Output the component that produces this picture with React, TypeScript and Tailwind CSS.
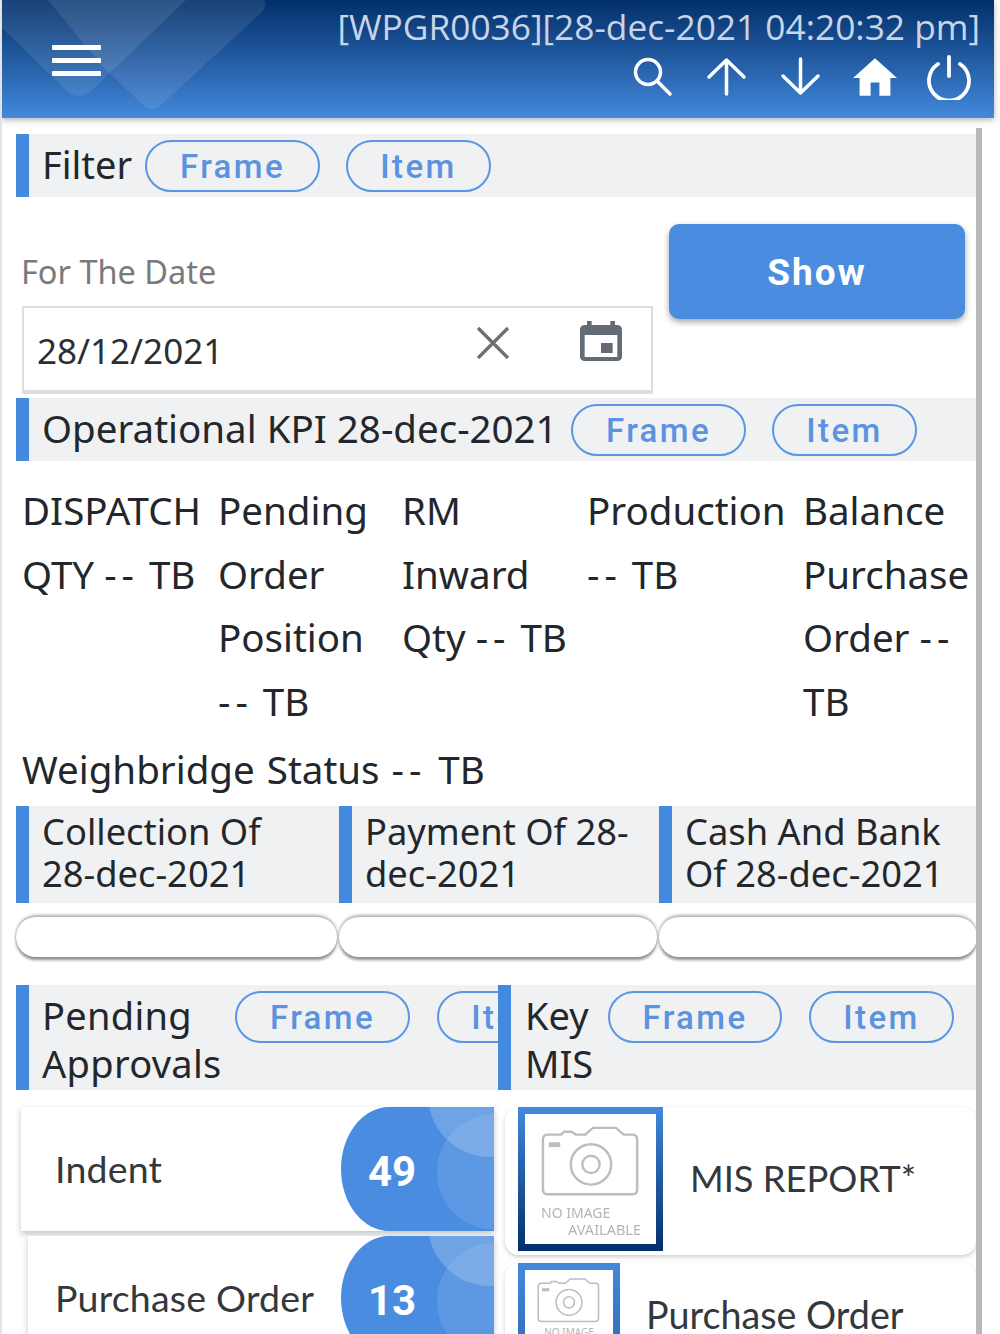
import React from "react";

const Pill = ({ label, w }: { label: string; w: string }) => (
  <span className={`flex h-[52px] shrink-0 items-center justify-center rounded-full border-2 border-[#5a96e3] pt-[2px] font-['Roboto',sans-serif] text-[33px] font-medium tracking-[2.4px] text-[#5b93e0] ${w}`}>
    {label}
  </span>
);

const Head = ({ h = "h-[63px]", className = "", children }: { h?: string; className?: string; children?: React.ReactNode }) => (
  <div className={`flex overflow-hidden bg-[#f0f1f3] ${h} ${className}`}>
    <div className="mr-[13px] w-[13px] shrink-0 bg-[#4389e0]" />
    {children}
  </div>
);

const Camera = ({ w, h }: { w: number; h: number }) => (
  <svg width={w} height={h} viewBox="14 13 104 74" fill="none" stroke="#bdbdbd" strokeWidth="2.5" className="blur-[0.4px]">
    <path d="M21 22h14l3-3h8l4 3h10l8-7h24l8 7h9q5 0 5 5v52q0 5-5 5H21q-5 0-5-5V27q0-5 5-5z" />
    <circle cx="66" cy="53" r="21" />
    <circle cx="66" cy="53" r="9" />
    <rect x="22" y="30" width="12" height="5" fill="#bdbdbd" stroke="none" />
  </svg>
);

const Stat = ({ label, value, className = "", pad }: { label: string; value: string; className?: string; pad: string }) => (
  <div className={`flex h-[124px] items-center justify-between bg-white shadow-[0_3px_6px_rgba(120,130,140,0.45)] ${className}`}>
    <span className={`font-['Lato',sans-serif] text-[37.5px] tracking-[0.2px] text-[#33383d] ${pad}`}>{label}</span>
    <div className="relative flex h-full w-[153px] items-center overflow-hidden rounded-l-[48px_62px] bg-[#4a8de0]">
      <span className="absolute left-[96px] top-[7px] h-[116px] w-[116px] rounded-full bg-white/10" />
      <span className="absolute left-[87px] top-[-74px] h-[124px] w-[124px] rounded-full bg-white/20" />
      <span className="relative pl-[27px] pt-[4px] font-['Roboto',sans-serif] text-[42px] font-bold text-white">{value}</span>
    </div>
  </div>
);

const D = () => <span className="tracking-[5px]">--</span>;

export default function App() {
  return (
    <div className="h-[1334px] w-[1000px] overflow-hidden border-l-2 border-[#e4e4e4] bg-white font-['Noto_Sans',sans-serif] text-[#23272c]">
      <header className="relative flex h-[118px] w-[992px] flex-col items-end overflow-hidden bg-gradient-to-b from-[#03306b] to-[#4389dc] pr-[14px] shadow-[0_2px_6px_rgba(0,0,0,0.3)]">
        <svg className="absolute left-0 top-0" width="270" height="112" viewBox="0 0 270 112" fill="#ffffff" fillOpacity="0.09">
          <path d="M0 0h184L88 92q-12 8-22 0L0 28z" />
          <path d="M46 0h216q4 6-2 12L158 106q-8 6-16 0L100 66z" />
        </svg>
        <svg className="absolute left-[50px] top-[44px]" width="50" height="36" viewBox="0 0 50 36" fill="#fff">
          <rect x="0" y="1" width="49" height="5" rx="1" />
          <rect x="0" y="14" width="49" height="5" rx="1" />
          <rect x="0" y="27" width="49" height="5" rx="1" />
        </svg>
        <div className="relative mt-[1px] h-[50px] whitespace-nowrap font-['Open_Sans',sans-serif] text-[35.3px] leading-[50px] text-[#c8d5e6]">
          [WPGR0036][28-dec-2021 04:20:32 pm]
        </div>
        <div className="relative mt-[3px] flex items-center gap-[31px] pr-[8px] text-white">
          <svg width="44" height="44" viewBox="0 0 44 44" fill="none" stroke="#fff" strokeWidth="3.5" strokeLinecap="round">
            <circle cx="18" cy="17" r="12.5" />
            <path d="M27 26l13 13" />
          </svg>
          <svg width="43" height="44" viewBox="0 0 43 44" fill="none" stroke="#fff" strokeWidth="3.5" strokeLinecap="round" strokeLinejoin="round">
            <path d="M21.5 39V5M4 22L21.5 5 39 22" />
          </svg>
          <svg width="43" height="44" viewBox="0 0 43 44" fill="none" stroke="#fff" strokeWidth="3.5" strokeLinecap="round" strokeLinejoin="round">
            <path d="M21.5 4v34M4 21l17.5 17L39 21" />
          </svg>
          <svg width="44" height="44" viewBox="2 3 20 17" fill="#fff">
            <path d="M10 20v-6h4v6h5v-8h3L12 3 2 12h3v8z" />
          </svg>
          <svg width="46" height="46" viewBox="0 0 46 46" fill="none" stroke="#fff" strokeWidth="3.8" strokeLinecap="round" className="-ml-[2px]">
            <path d="M23 3v19M12 10a20 20 0 1 0 22 0" />
          </svg>
        </div>
      </header>

      <div className="flex pl-[14px] pt-[10px]">
        <main className="w-[960px] pt-[6px]">
          <Head>
            <span className="w-[103px] shrink-0 text-[38px] leading-[60px]">Filter</span>
            <div className="flex items-center gap-[26px]">
              <Pill label="Frame" w="w-[175px]" />
              <Pill label="Item" w="w-[145px]" />
            </div>
          </Head>

          <div className="flex h-[196px] items-start pl-[6px]">
            <div className="w-[631px]">
              <div className="-ml-px flex h-[109px] items-end pb-[12px] text-[32.5px] leading-[44px] text-[#7a7a7a]">For The Date</div>
              <div className="flex h-[88px] w-[631px] items-center justify-between border-2 border-b-4 border-[#dedede] pl-[13px] pr-[22px]">
                <span className="pt-[4px] text-[35px] text-[#2b2f33]">28/12/2021</span>
                <div className="flex items-center gap-[62px] pb-[12px]">
                  <svg width="36" height="36" viewBox="0 0 36 36" fill="none" stroke="#6b7075" strokeWidth="3.2">
                    <path d="M3 3l30 30M33 3L3 33" />
                  </svg>
                  <svg width="56" height="48" viewBox="0 0 24 24" fill="#636b74" preserveAspectRatio="none">
                    <path d="M17 12h-5v5h5v-5zM16 1v2H8V1H6v2H5c-1.11 0-1.99.9-1.99 2L3 19c0 1.1.89 2 2 2h14c1.1 0 2-.9 2-2V5c0-1.1-.9-2-2-2h-1V1h-2zm3 18H5V8h14v11z" />
                  </svg>
                </div>
              </div>
            </div>
            <button className="ml-[16px] mt-[27px] h-[95px] w-[296px] rounded-[10px] bg-[#4a8de0] pt-[2px] font-['Roboto',sans-serif] text-[37px] font-bold tracking-[2px] text-white shadow-[0_3px_6px_rgba(0,0,0,0.35)]">
              Show
            </button>
          </div>

          <Head className="mt-[5px]">
            <span className="w-[529px] shrink-0 whitespace-nowrap text-[38.5px] leading-[60px]">Operational KPI 28-dec-2021</span>
            <div className="flex items-center gap-[26px]">
              <Pill label="Frame" w="w-[175px]" />
              <Pill label="Item" w="w-[145px]" />
            </div>
          </Head>

          <div className="mt-[18px] grid grid-cols-[196px_184px_185px_216px_179px] whitespace-nowrap pl-[6px] text-[38.5px] leading-[63.5px]">
            <div>DISPATCH<br />QTY <D /> TB</div>
            <div>Pending<br />Order<br />Position<br /><D /> TB</div>
            <div>RM<br />Inward<br />Qty <D /> TB</div>
            <div>Production<br /><D /> TB</div>
            <div>Balance<br />Purchase<br />Order <D /><br />TB</div>
          </div>
          <div className="mt-[5px] pl-[6px] text-[38.5px] leading-[63px] [word-spacing:2px]">Weighbridge Status <D /> TB</div>

          <div className="mt-[5px] grid grid-cols-[323px_320px_317px] text-[36.3px] leading-[42px]">
            <Head h="h-[97px]"><span className="whitespace-nowrap pt-[4px]">Collection Of<br />28-dec-2021</span></Head>
            <Head h="h-[97px]"><span className="whitespace-nowrap pt-[4px]">Payment Of 28-<br />dec-2021</span></Head>
            <Head h="h-[97px]"><span className="whitespace-nowrap pt-[4px]">Cash And Bank<br />Of 28-dec-2021</span></Head>
          </div>
          <div className="mt-[14px] grid grid-cols-[323px_320px_318px]">
            <div className="mr-[2px] h-[40px] rounded-[20px] bg-white shadow-[0_3px_3px_#8f8f8f,0_-2px_3px_#b0b0b0]" />
            <div className="mr-[2px] h-[40px] rounded-[20px] bg-white shadow-[0_3px_3px_#8f8f8f,0_-2px_3px_#b0b0b0]" />
            <div className="h-[40px] rounded-[20px] bg-white shadow-[0_3px_3px_#8f8f8f,0_-2px_3px_#b0b0b0]" />
          </div>

          <div className="mt-[28px] grid grid-cols-[482px_478px]">
            <div>
              <Head h="h-[105px]">
                <span className="w-[193px] shrink-0 pt-[6px] text-[38px] leading-[48px] tracking-[0.3px]">Pending Approvals</span>
                <div className="mt-[6px] flex h-[52px] gap-[27px]">
                  <Pill label="Frame" w="w-[175px]" />
                  <Pill label="Item" w="w-[145px]" />
                </div>
              </Head>
              <div className="mt-[17px] pl-[5px] pr-[4px]">
                <Stat label="Indent" value="49" pad="pl-[34px]" />
                <Stat label="Purchase Order" value="13" className="ml-[7px] mt-[5px]" pad="pl-[27px]" />
              </div>
            </div>
            <div>
              <Head h="h-[105px]">
                <span className="w-[84px] shrink-0 pl-px pt-[6px] text-[38px] leading-[48px]">Key<br />MIS</span>
                <div className="mt-[6px] flex h-[52px] gap-[27px]">
                  <Pill label="Frame" w="w-[174px]" />
                  <Pill label="Item" w="w-[145px]" />
                </div>
              </Head>
              <div className="mt-[17px] pl-[7px]">
                <div className="flex h-[148px] items-start rounded-[14px] bg-white pl-[13px] shadow-[0_2px_4px_rgba(0,0,0,0.2)]">
                  <div className="h-[144px] w-[145px] shrink-0 bg-gradient-to-b from-[#4389dc] to-[#03306b] p-[7px]">
                    <div className="flex h-full flex-col items-center bg-white pt-[11px]">
                      <Camera w={100} h={73} />
                      <div className="mt-[6px] w-full blur-[0.4px] pl-[16px] text-[14px] leading-[17px] text-[#b5b5b5]">NO IMAGE</div>
                      <div className="w-full blur-[0.4px] pr-[15px] text-right text-[14.5px] leading-[17px] text-[#b5b5b5]">AVAILABLE</div>
                    </div>
                  </div>
                  <span className="self-center whitespace-nowrap pb-[6px] pl-[27px] font-['Lato',sans-serif] text-[36.3px] text-[#33383d]">MIS REPORT*</span>
                </div>
                <div className="mt-[8px] flex h-[120px] items-start rounded-[14px] bg-white pl-[13px] shadow-[0_2px_4px_rgba(0,0,0,0.2)]">
                  <div className="h-[120px] w-[102px] shrink-0 bg-gradient-to-b from-[#4389dc] to-[#2a63ad] p-[7px]">
                    <div className="flex h-full flex-col items-center overflow-hidden bg-white pt-[7px]">
                      <Camera w={64} h={47} />
                      <div className="mt-[1px] whitespace-nowrap text-[10px] text-[#b5b5b5]">NO IMAGE</div>
                    </div>
                  </div>
                  <span className="whitespace-nowrap pl-[26px] pt-[24px] font-['Lato',sans-serif] text-[37.7px] text-[#33383d]">Purchase Order</span>
                </div>
              </div>
            </div>
          </div>
        </main>
        <div className="h-[1206px] w-[6px] shrink-0 bg-[#b9b9b9]" />
      </div>
    </div>
  );
}
